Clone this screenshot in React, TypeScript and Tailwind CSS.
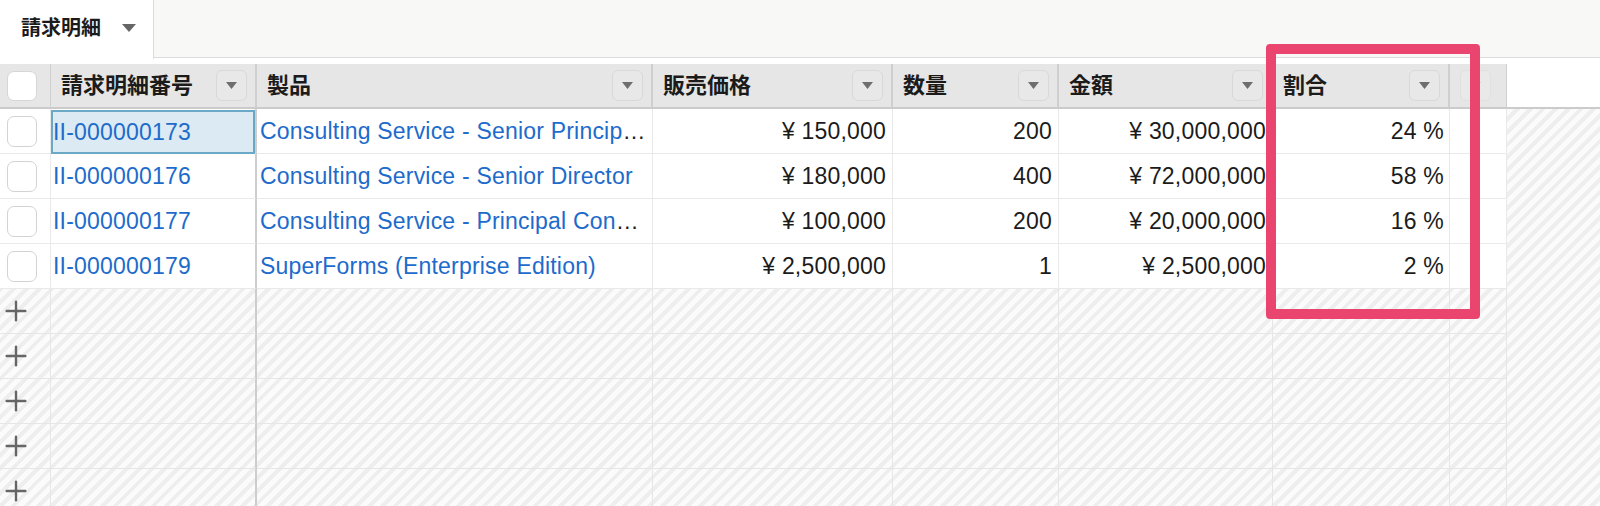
import { Plus } from 'lucide-react';
import clsx from 'clsx';

interface LineItem {
  no: string;
  product: string;
  price: string;
  qty: string;
  amount: string;
  ratio: string;
}

const items: LineItem[] = [
  { no: 'II-000000173', product: 'Consulting Service - Senior Principal Consultant', price: '¥ 150,000', qty: '200', amount: '¥ 30,000,000', ratio: '24 %' },
  { no: 'II-000000176', product: 'Consulting Service - Senior Director', price: '¥ 180,000', qty: '400', amount: '¥ 72,000,000', ratio: '58 %' },
  { no: 'II-000000177', product: 'Consulting Service - Principal Consultant', price: '¥ 100,000', qty: '200', amount: '¥ 20,000,000', ratio: '16 %' },
  { no: 'II-000000179', product: 'SuperForms (Enterprise Edition)', price: '¥ 2,500,000', qty: '1', amount: '¥ 2,500,000', ratio: '2 %' },
];

const hatch =
  'bg-[image:repeating-linear-gradient(135deg,#eeeeee_0px,#eeeeee_4px,#fbfbfb_4px,#fbfbfb_9px)]';

function Caret({ faded }: { faded?: boolean }) {
  return (
    <svg width="11" height="7" viewBox="0 0 11 7" className="block">
      <polygon points="0,0 11,0 5.5,7" fill={faded ? '#c4c4c4' : '#6e6e6e'} />
    </svg>
  );
}

function MenuButton({ faded }: { faded?: boolean }) {
  return (
    <div
      className={clsx(
        'w-[31px] h-[31px] shrink-0 rounded-[6px] border flex items-center justify-center',
        faded ? 'border-[#e0e0e0] bg-[#e9e9e9]' : 'border-[#d9d9d9] bg-[#e8e8e8]'
      )}
    >
      <Caret faded={faded} />
    </div>
  );
}

function HeaderCell({ label, width }: { label: string; width: string }) {
  return (
    <div className={clsx(width, 'h-full shrink-0 flex items-center justify-between pl-[10px] pr-[8px] border-r-2 border-[#cfcfcf]')}>
      <span className="text-[22px] font-bold text-[#1b1b1b]">{label}</span>
      <MenuButton />
    </div>
  );
}

function Checkbox() {
  return <div className="w-[30px] h-[31px] rounded-[7px] border border-[#d3d3d3] bg-white" />;
}

function DataRow({ item, selected }: { item: LineItem; selected?: boolean }) {
  const cell = 'h-full shrink-0 bg-white border-r border-b border-[#e9e9e9] flex items-center';
  return (
    <div className="flex h-[45px]">
      <div className={clsx(cell, 'w-[51px] pl-[7px]')}>
        <Checkbox />
      </div>
      <div className="w-[206px] h-full shrink-0 bg-white border-r-2 border-r-[#cdcdcd] border-b border-b-[#e9e9e9]">
        <div
          className={clsx(
            'h-full flex items-center pl-[2px]',
            selected && 'bg-[#dbeaf3] shadow-[inset_0_0_0_2px_#6aa8c6] mt-[1px] h-[42px]'
          )}
        >
          <span className="text-[#1d6bcb]">{item.no}</span>
        </div>
      </div>
      <div className={clsx(cell, 'w-[396px] pl-[3px] pr-[4px]')}>
        <div className="truncate text-[#1b1b1b]">
          <span className="text-[#1d6bcb]">{item.product}</span>
        </div>
      </div>
      <div className={clsx(cell, 'w-[240px] justify-end pr-[6px]')}>{item.price}</div>
      <div className={clsx(cell, 'w-[166px] justify-end pr-[6px]')}>{item.qty}</div>
      <div className={clsx(cell, 'w-[214px] justify-end pr-[6px]')}>{item.amount}</div>
      <div className={clsx(cell, 'w-[177px] justify-end pr-[5px]')}>{item.ratio}</div>
      <div className={clsx(cell, 'w-[57px]')} />
    </div>
  );
}

function EmptyRow() {
  const cell = 'h-full shrink-0 border-r border-b border-[#e6e6e6]';
  return (
    <div className="flex h-[45px]">
      <div className={clsx(cell, 'w-[51px] flex items-center text-[#666666]')}>
        <Plus size={32} strokeWidth={1.8} />
      </div>
      <div className="w-[206px] h-full shrink-0 border-r-2 border-r-[#cdcdcd] border-b border-b-[#e6e6e6]" />
      <div className={clsx(cell, 'w-[396px]')} />
      <div className={clsx(cell, 'w-[240px]')} />
      <div className={clsx(cell, 'w-[166px]')} />
      <div className={clsx(cell, 'w-[214px]')} />
      <div className={clsx(cell, 'w-[177px]')} />
      <div className={clsx(cell, 'w-[57px]')} />
    </div>
  );
}

export default function App() {
  return (
    <div className="relative w-[1600px] h-[506px] overflow-hidden bg-white font-['Liberation_Sans','Noto_Sans_CJK_JP',sans-serif] text-[#1b1b1b]">
      {/* Tab bar */}
      <div className="flex h-[58px] bg-[#f8f8f7]">
        <div className="w-[154px] h-[59px] bg-white border-r border-[#dcdcdc] flex items-center pl-[21px] gap-[21px] pb-[4px]">
          <span className="text-[20px] font-bold">請求明細</span>
          <svg width="14" height="8" viewBox="0 0 14 8">
            <polygon points="0,0 14,0 7,8" fill="#666666" />
          </svg>
        </div>
        <div className="flex-1 border-b border-[#dcdcdc]" />
      </div>
      <div className="h-[6px]" />

      {/* Column header */}
      <div className="flex h-[45px] border-b-2 border-[#cbcbcb]">
        <div className="w-[51px] h-full shrink-0 bg-[#e6e6e6] border-r border-[#cfcfcf] flex items-center pl-[7px]">
          <div className="w-[30px] h-[30px] rounded-[7px] border border-[#d6d6d6] bg-white" />
        </div>
        <div className="flex bg-[#e6e6e6]">
          <HeaderCell label="請求明細番号" width="w-[206px]" />
          <HeaderCell label="製品" width="w-[396px]" />
          <HeaderCell label="販売価格" width="w-[240px]" />
          <HeaderCell label="数量" width="w-[166px]" />
          <HeaderCell label="金額" width="w-[214px]" />
          <HeaderCell label="割合" width="w-[177px]" />
          <div className="w-[57px] h-full shrink-0 border-r border-[#cfcfcf] flex items-center pl-[10px]">
            <MenuButton faded />
          </div>
        </div>
        <div className="flex-1 bg-white" />
      </div>

      {/* Body */}
      <div className={clsx('text-[23px] tracking-[0.2px]', hatch)}>
        {items.map((item, i) => (
          <DataRow key={item.no} item={item} selected={i === 0} />
        ))}
        {[0, 1, 2, 3, 4].map((n) => (
          <EmptyRow key={n} />
        ))}
      </div>

      {/* Highlight annotation */}
      <div className="absolute left-[1266px] top-[44px] w-[214px] h-[275px] border-[10px] border-[#e9456f] rounded-[4px]" />
    </div>
  );
}
